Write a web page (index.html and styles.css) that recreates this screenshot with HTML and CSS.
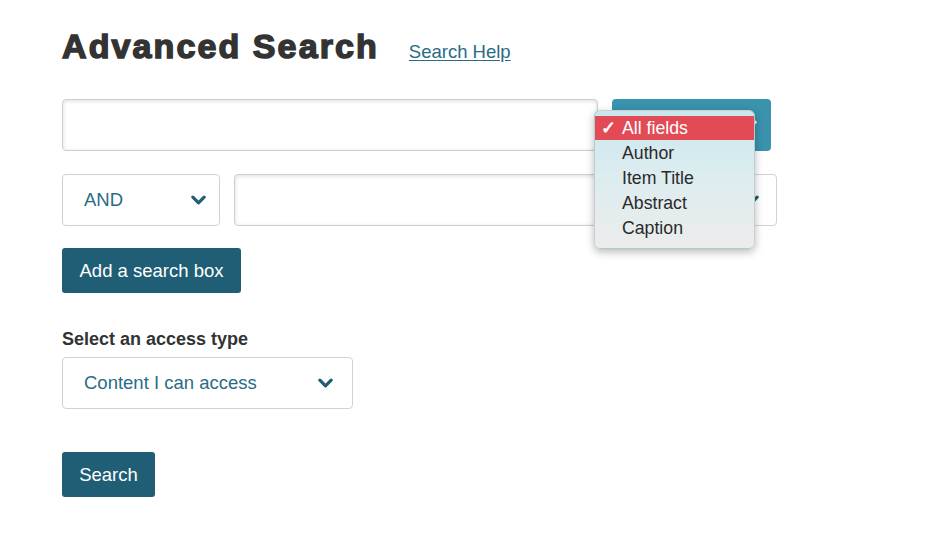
FILE: index.html
```html
<!DOCTYPE html>
<html lang="en">
<head>
<meta charset="utf-8">
<title>Advanced Search</title>
<link rel="stylesheet" href="styles.css">
</head>
<body>
<main class="page">
  <header class="title-row">
    <h1 class="title">Advanced Search</h1>
    <a class="help-link" href="#">Search Help</a>
  </header>

  <div class="query-row">
    <div class="text-field wide"></div>
    <div class="field-select primary">
      <svg class="chev" viewBox="0 0 16 10" width="15" height="10"><polyline points="2,2 8,8 14,2"/></svg>
      <ul class="menu">
        <li class="menu-item selected"><span class="tick">✓</span>All fields</li>
        <li class="menu-item">Author</li>
        <li class="menu-item">Item Title</li>
        <li class="menu-item">Abstract</li>
        <li class="menu-item">Caption</li>
      </ul>
    </div>
  </div>

  <div class="query-row">
    <div class="select-box op">
      <span class="select-text">AND</span>
      <svg class="chev" viewBox="0 0 16 10" width="15" height="10"><polyline points="2,2 8,8 14,2"/></svg>
    </div>
    <div class="text-field mid"></div>
    <div class="select-box field">
      <svg class="chev" viewBox="0 0 16 10" width="15" height="10"><polyline points="2,2 8,8 14,2"/></svg>
    </div>
  </div>

  <button class="btn add-btn" type="button">Add a search box</button>

  <section class="access">
    <label class="access-label">Select an access type</label>
    <div class="select-box access-select">
      <span class="select-text">Content I can access</span>
      <svg class="chev" viewBox="0 0 16 10" width="15" height="10"><polyline points="2,2 8,8 14,2"/></svg>
    </div>
  </section>

  <button class="btn search-btn" type="button">Search</button>
</main>
</body>
</html>
```

FILE: styles.css
```css
* { box-sizing: border-box; }

html, body {
  margin: 0;
  background: #ffffff;
}

body {
  font-family: "Liberation Sans", Arial, sans-serif;
  color: #333333;
  width: 940px;
  height: 533px;
  overflow: hidden;
}

.page {
  padding: 26px 0 0 62px;
  display: flex;
  flex-direction: column;
  align-items: flex-start;
}

/* heading */
.title-row {
  display: flex;
  align-items: baseline;
  gap: 30px;
  height: 46px;
}

.title {
  margin: 0;
  font-size: 34px;
  line-height: 40px;
  font-weight: 700;
  letter-spacing: 2.1px;
  color: #333333;
  -webkit-text-stroke: 1.5px #333333;
}

.help-link {
  font-size: 18.5px;
  color: #2a6c85;
  text-decoration: underline;
  text-underline-offset: 2px;
}

/* query rows */
.query-row {
  display: flex;
  gap: 14px;
  margin-top: 27px;
}

.query-row + .query-row {
  margin-top: 23px;
}

.text-field {
  height: 52px;
  border: 1px solid #cfcfcf;
  border-radius: 4px;
  background: #fff;
  box-shadow: inset 0 1px 4px rgba(0, 0, 0, 0.14);
}

.text-field.wide { width: 536px; }
.text-field.mid { width: 364px; }

.chev {
  fill: none;
  stroke: #1f5e74;
  stroke-width: 3.4;
  stroke-linecap: round;
  stroke-linejoin: round;
  flex: none;
}

.field-select {
  position: relative;
  width: 159px;
  height: 52px;
  border-radius: 4px;
  background: #3a93ad;
  display: flex;
  align-items: center;
  justify-content: flex-end;
  padding: 0 14px 0 20px;
}

.field-select .chev { stroke: #ffffff; }

/* open option list */
.menu {
  position: absolute;
  left: -18px;
  top: 11px;
  width: 161px;
  margin: 0;
  padding: 5px 0 7px;
  list-style: none;
  border-radius: 6px;
  border: 1px solid rgba(0, 0, 0, 0.12);
  background: linear-gradient(#c7e8ee 0%, #dcecef 45%, #ececec 100%);
  box-shadow: 0 3px 9px rgba(0, 0, 0, 0.28);
  z-index: 5;
}

.menu-item {
  height: 25px;
  line-height: 25px;
  padding-left: 27px;
  font-size: 17.7px;
  color: #2a2a2a;
  position: relative;
}

.menu-item.selected {
  background: #e24b56;
  color: #ffffff;
  height: 24px;
  line-height: 24px;
  margin-bottom: 1px;
}

.tick {
  position: absolute;
  left: 6px;
  top: 0;
  font-size: 18px;
  font-weight: 700;
}

/* plain selects */
.select-box {
  height: 52px;
  border: 1px solid #d2d2d2;
  border-radius: 4px;
  background: #fff;
  display: flex;
  align-items: center;
  justify-content: space-between;
  padding: 0 13px 0 21px;
  font-size: 18.5px;
  color: #2a6c85;
}

.select-box.op { width: 158px; }
.select-box.field { width: 165px; padding-right: 17px; justify-content: flex-end; }

/* buttons */
.btn {
  border: none;
  border-radius: 3px;
  background: #1f5e74;
  color: #ffffff;
  font-family: "Liberation Sans", Arial, sans-serif;
  font-size: 18.5px;
  height: 45px;
  padding: 0;
  cursor: pointer;
}

.add-btn {
  margin-top: 22px;
  width: 179px;
}

/* access type */
.access {
  margin-top: 35px;
  display: flex;
  flex-direction: column;
  align-items: flex-start;
}

.access-label {
  font-size: 18px;
  font-weight: 700;
  color: #333333;
  line-height: 22px;
}

.access-select {
  margin-top: 7px;
  width: 291px;
  padding-right: 19px;
}

.search-btn {
  margin-top: 43px;
  width: 93px;
}
```
